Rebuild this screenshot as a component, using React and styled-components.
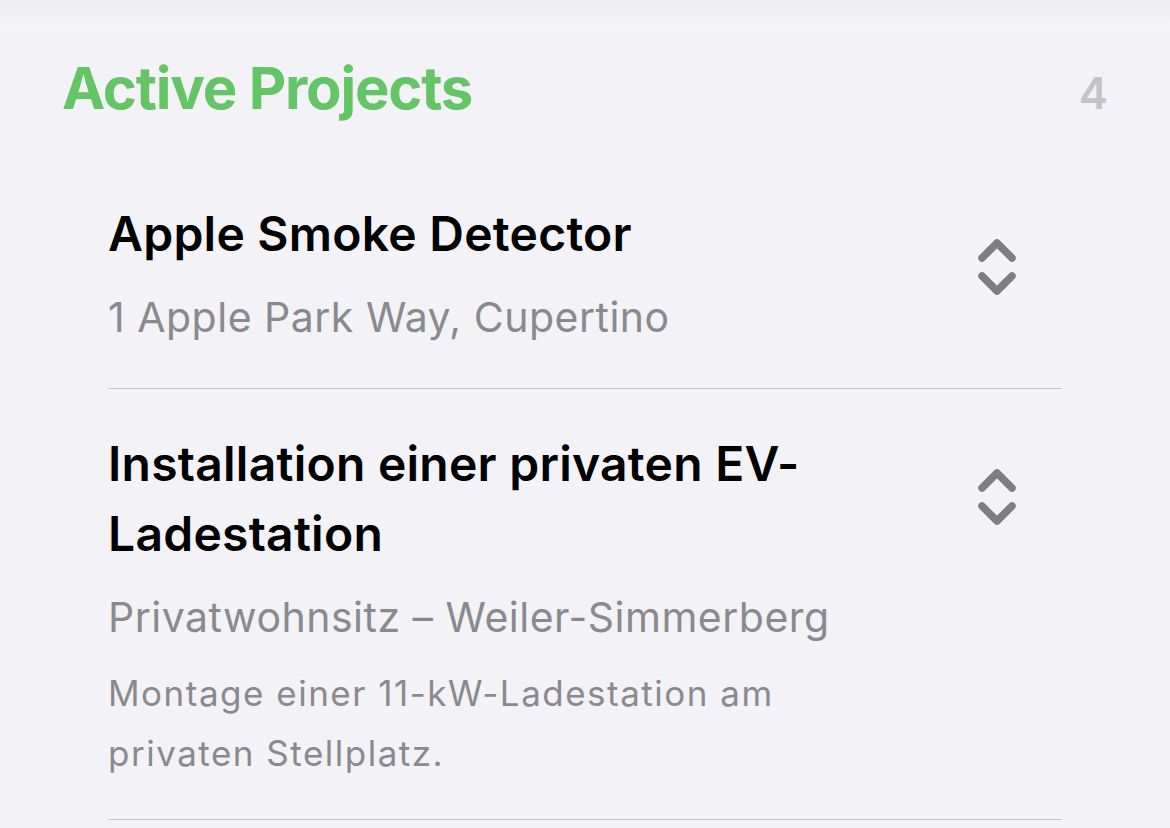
import React from "react";
import styled, { createGlobalStyle } from "styled-components";

const GlobalStyle = createGlobalStyle`
  html, body {
    margin: 0;
    padding: 0;
    background: #f2f2f7;
  }
  body {
    font-family: Inter, "Noto Sans", "Liberation Sans", sans-serif;
    -webkit-font-smoothing: antialiased;
  }
`;

const Page = styled.div`
  min-height: 828px;
  padding: 54px 62px 0;
  box-sizing: border-box;
  background: linear-gradient(
    to bottom,
    #ececf1 0px,
    #f5f5f8 24px,
    #f4f4f7 52px,
    #f2f2f7 72px
  );
`;

const Header = styled.div`
  display: flex;
  justify-content: space-between;
  align-items: baseline;
  margin-bottom: 35px;
`;

const Title = styled.h1`
  margin: 0;
  font-size: 58px;
  line-height: 1.2;
  font-weight: 700;
  letter-spacing: -1.2px;
  color: #65c466;
`;

const Count = styled.span`
  font-size: 44px;
  font-weight: 600;
  color: #c4c4c8;
`;

const List = styled.div`
  padding: 0 46px;
`;

const Row = styled.div`
  display: flex;
  align-items: flex-start;
  gap: 24px;
  padding: 40px 0 45px;
  border-bottom: 1.5px solid #c6c6c8;
`;

const Content = styled.div`
  flex: 1;
  min-width: 0;
`;

const Name = styled.div`
  font-size: 48px;
  line-height: 70px;
  font-weight: 600;
  letter-spacing: 0.25px;
  color: #000;
`;

const Place = styled.div`
  margin-top: 23px;
  font-size: 41px;
  line-height: 51px;
  font-weight: 400;
  letter-spacing: 0.5px;
  color: #8a8a8e;
`;

const Note = styled.div`
  max-width: 720px;
  margin: 20px 0 -9px;
  font-size: 35px;
  line-height: 60px;
  font-weight: 400;
  letter-spacing: 1.5px;
  color: #8a8a8e;
`;

const Stepper = styled.svg`
  flex: none;
  width: 42px;
  height: 62px;
  margin-top: 38px;
  margin-right: 44px;
`;

const ChevronUpDown = () => (
  <Stepper viewBox="0 0 42 62" fill="none">
    <path
      d="M6 21 L21 6 L36 21 M6 39 L21 54 L36 39"
      stroke="#7d7d82"
      strokeWidth="7.5"
      strokeLinecap="round"
      strokeLinejoin="round"
    />
  </Stepper>
);

const projects = [
  {
    name: "Apple Smoke Detector",
    place: "1 Apple Park Way, Cupertino",
  },
  {
    name: "Installation einer privaten EV-Ladestation",
    place: "Privatwohnsitz – Weiler-Simmerberg",
    note: "Montage einer 11-kW-Ladestation am privaten Stellplatz.",
  },
];

const App = () => {
  return (
    <>
      <GlobalStyle />
      <Page>
        <Header>
          <Title>Active Projects</Title>
          <Count>4</Count>
        </Header>
        <List>
          {projects.map((p) => (
            <Row key={p.name}>
              <Content>
                <Name>{p.name}</Name>
                <Place>{p.place}</Place>
                {p.note && <Note>{p.note}</Note>}
              </Content>
              <ChevronUpDown />
            </Row>
          ))}
        </List>
      </Page>
    </>
  );
};

export default App;
